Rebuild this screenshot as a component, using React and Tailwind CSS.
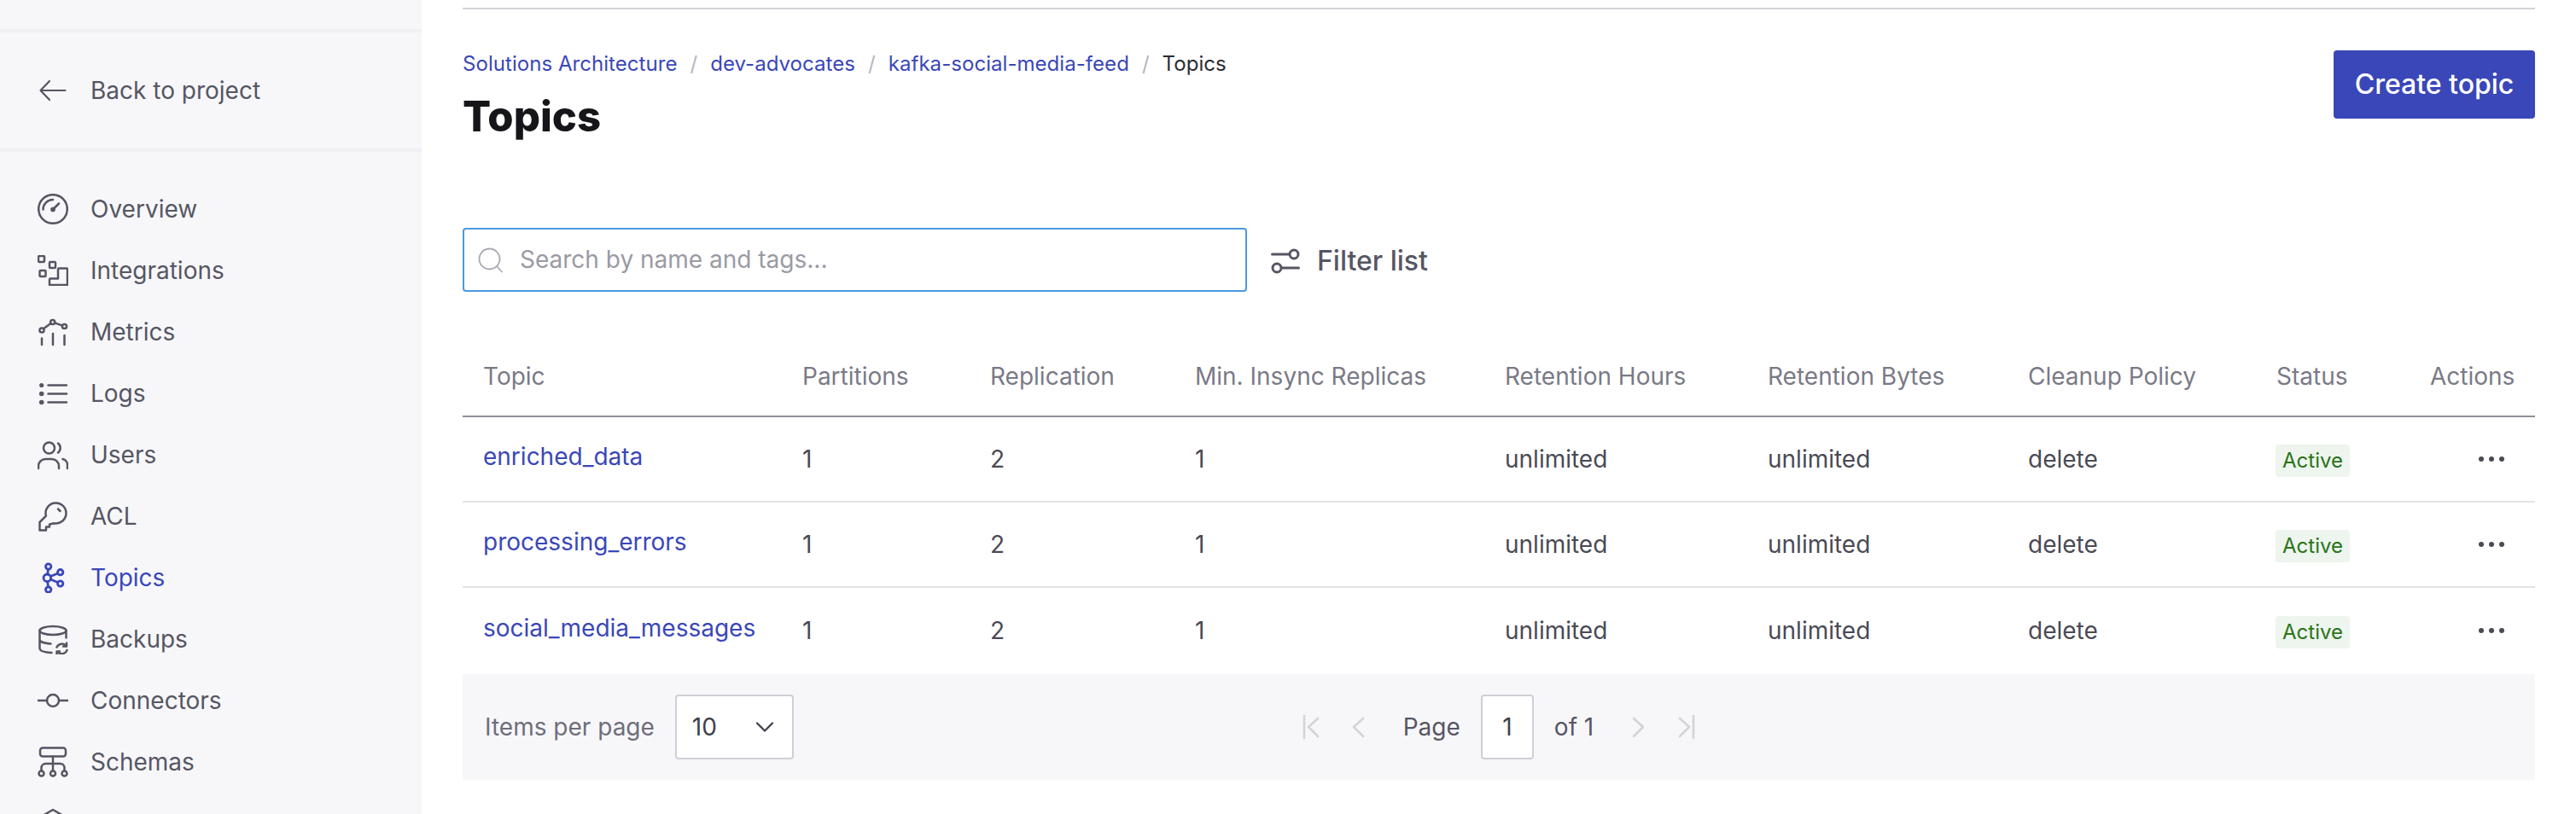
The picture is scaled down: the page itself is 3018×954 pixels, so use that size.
import { ChevronDown } from "lucide-react";

const BLUE = "#3a47b8";

// Sidebar icons are drawn on a 36px box, same as the reference.
function NavIcon({ children, color = "#565663", width = "2.5" }) {
  return (
    <svg width="36" height="36" viewBox="0 0 36 36" fill="none" stroke={color} strokeWidth={width} strokeLinecap="round" strokeLinejoin="round" className="shrink-0">
      {children}
    </svg>
  );
}

const navItems = [
  {
    label: "Overview",
    icon: (
      <>
        <circle cx="18" cy="18" r="16.8" />
        <path d="M6.5 18.5A11.5 11.5 0 0 1 18 7" />
        <path d="M18 18.5L25 11.5" />
        <circle cx="18" cy="18.5" r="1.6" fill="#565663" />
      </>
    ),
  },
  {
    label: "Integrations",
    icon: (
      <>
        <rect x="1" y="1" width="7" height="7" rx="1" />
        <rect x="14" y="8" width="7" height="7" rx="1" />
        <rect x="2.5" y="18" width="7" height="7" rx="1" />
        <path d="M14 35V28.5a1 1 0 0 1 1-1h9V16.5a1 1 0 0 1 1-1h9a1 1 0 0 1 1 1V34a1 1 0 0 1-1 1z" />
      </>
    ),
  },
  {
    label: "Metrics",
    icon: (
      <>
        <circle cx="5" cy="16" r="2.6" />
        <circle cx="17.7" cy="6.5" r="2.6" />
        <circle cx="31.5" cy="11.5" r="2.6" />
        <path d="M7 14.2L15.5 8M20.2 7.4L29 10.6" />
        <path d="M5 25.5V33M18 20V33M31.5 22V33" />
      </>
    ),
  },
  {
    label: "Logs",
    icon: (
      <>
        <circle cx="4.7" cy="8.5" r="2.6" fill="#565663" stroke="none" />
        <circle cx="4.7" cy="18.5" r="2.8" fill="#565663" stroke="none" />
        <circle cx="4.7" cy="28.5" r="2.8" fill="#565663" stroke="none" />
        <path d="M12.5 8.5H34M12.5 18.5H34M12.5 28.5H34" />
      </>
    ),
  },
  {
    label: "Users",
    icon: (
      <>
        <circle cx="13.5" cy="10" r="6.5" />
        <path d="M24 4.5a7 7 0 0 1 0 11" />
        <path d="M1 34v-2.5a8.5 8.5 0 0 1 8.5-8.5h7a8.5 8.5 0 0 1 8.5 8.5V34" />
        <path d="M29.5 23a7 7 0 0 1 5.5 7v4" />
      </>
    ),
  },
  {
    label: "ACL",
    icon: (
      <>
        <path d="M19.4 26.3A12 12 0 1 0 9.9 17.6L2.5 25V34.5H10V30.5H14V27.5z" />
        <path d="M24 9.5l2.5 2.5" />
      </>
    ),
  },
  {
    label: "Topics",
    active: true,
    icon: (
      <>
        <circle cx="12.7" cy="5" r="3.2" />
        <circle cx="11.3" cy="18.3" r="4.3" />
        <circle cx="12.7" cy="32" r="3.2" />
        <circle cx="26.7" cy="11.7" r="3.2" />
        <circle cx="26.7" cy="25" r="3.2" />
        <path d="M12.5 8.2L11.7 14M12.5 28.8L11.7 22.6M15.2 16.5L23.7 13M15.2 20L23.7 23.5" />
      </>
    ),
  },
  {
    label: "Backups",
    icon: (
      <>
        <ellipse cx="18" cy="8" rx="15.5" ry="5" />
        <path d="M33.5 8v8.5M2.5 8v21c0 3 5 4.5 14 5M2.5 18.5c0 2.5 5 4.5 13 5" />
        <path d="M22.5 27.5a6.5 6.5 0 0 1 11-1.5M34.5 31a6.5 6.5 0 0 1-11 2" />
        <path d="M34 22.5V26.5H30M22.5 36V32.5H26" />
      </>
    ),
  },
  {
    label: "Connectors",
    icon: (
      <>
        <circle cx="18" cy="18" r="7" />
        <path d="M0.5 18H11M25 18H35.5" />
      </>
    ),
  },
  {
    label: "Schemas",
    icon: (
      <>
        <rect x="3" y="1.5" width="30" height="10" rx="3" />
        <path d="M18 11.5V28M4.5 28V25a5 5 0 0 1 5-5h17a5 5 0 0 1 5 5v3" />
        <circle cx="4.5" cy="31.5" r="3" />
        <circle cx="18" cy="31.5" r="3" />
        <circle cx="31.5" cy="31.5" r="3" />
      </>
    ),
  },
];

const topics = ["enriched_data", "processing_errors", "social_media_messages"];

function Sidebar() {
  return (
    <aside className="w-[494px] shrink-0 bg-[#f7f7fa] pt-[34px] text-[28px] text-[#565663]">
      <div className="flex h-[144px] items-center gap-[26px] border-y-[4px] border-[#f0f0f4] pl-[44px]">
        <svg width="36" height="36" viewBox="0 0 36 36" fill="none" stroke="#565663" strokeWidth="2.2" strokeLinecap="round" strokeLinejoin="round">
          <path d="M3.5 18H32.5M14 7L3.5 18L14 29" />
        </svg>
        <span>Back to project</span>
      </div>
      <nav className="pt-[31px]">
        {navItems.map((item) => (
          <div key={item.label} className={`flex h-[72px] items-center gap-[26px] pl-[44px] ${item.active ? "text-[#3a47b8]" : ""}`}>
            <NavIcon color={item.active ? BLUE : "#565663"} width={item.active ? "2.8" : "2.5"}>{item.icon}</NavIcon>
            <span>{item.label}</span>
          </div>
        ))}
        {/* next item is cut off by the window, only its icon's tip shows */}
        <div className="flex h-[72px] items-center pl-[44px]">
          <NavIcon>
            <path d="M6 9L18 2L30 9" />
          </NavIcon>
        </div>
      </nav>
    </aside>
  );
}

function Breadcrumbs() {
  const links = ["Solutions Architecture", "dev-advocates", "kafka-social-media-feed"];
  return (
    <div className="flex items-center text-[24px] leading-[32px] tracking-[0.05px] text-[#3a47b8]">
      {links.map((link) => (
        <span key={link} className="flex items-center">
          <span>{link}</span>
          <span className="px-[15px] text-[#b5b5bd]">/</span>
        </span>
      ))}
      <span className="text-[#2b2b33]">Topics</span>
    </div>
  );
}

function PagerIcon({ d }) {
  return (
    <svg width="20" height="30" viewBox="0 0 20 30" fill="none" stroke="#d3d3d8" strokeWidth="2.6" strokeLinecap="round" strokeLinejoin="round">
      <path d={d} />
    </svg>
  );
}

function Pagination() {
  return (
    <div className="grid h-[124px] grid-cols-[1fr_auto_1fr] items-center bg-[#f7f7fa] px-[26px] text-[28px] text-[#565663]">
      <div className="flex items-center gap-[24px]">
        <span className="text-[#6e6e7a]">Items per page</span>
        <div className="flex h-[76px] w-[139px] items-center justify-between rounded-[4px] border-2 border-[#cfcfd6] bg-white pl-[18px] pr-[14px] text-[#3f3f4a]">
          <span>10</span>
          <ChevronDown size={36} strokeWidth={1.5} />
        </div>
      </div>
      <div className="flex items-center">
        <PagerIcon d="M2 2V28M18 5L7 15L18 26" />
        <span className="ml-[36px]"><PagerIcon d="M15 5L4 15L15 26" /></span>
        <span className="ml-[42px]">Page</span>
        <div className="ml-[24px] flex h-[76px] w-[62px] items-center justify-center rounded-[4px] border-2 border-[#cfcfd6] bg-white text-[#3f3f4a]">1</div>
        <span className="ml-[24px]">of 1</span>
        <span className="ml-[42px]"><PagerIcon d="M5 5L16 15L5 26" /></span>
        <span className="ml-[37px]"><PagerIcon d="M2 5L13 15L2 26M18 2V28" /></span>
      </div>
      <div />
    </div>
  );
}

function TopicsTable() {
  const cols = "grid grid-cols-[374px_220px_240px_363px_308px_305px_292px_181px_145px] items-center";
  const headers = ["Topic", "Partitions", "Replication", "Min. Insync Replicas", "Retention Hours", "Retention Bytes", "Cleanup Policy", "Status", "Actions"];
  return (
    <div className="mt-[53px] text-[28px]">
      <div className={`${cols} h-[94px] border-b-2 border-[#8e8e99] text-[#7a7a87]`}>
        {headers.map((h, i) => (
          <div key={h} className={i === 7 ? "pl-[23px]" : i === 8 ? "pl-[22px]" : "pl-[24px]"}>{h}</div>
        ))}
      </div>
      {topics.map((name, i) => (
        <div key={name} className={`${cols} text-[#4a4a55] ${i < 2 ? "h-[100px] border-b-2 border-[#e3e3e6]" : "h-[101px] pb-[2px]"}`}>
          <div className="-mt-[6px] pl-[24px] text-[#3a47b8]">{name}</div>
          <div className="pl-[24px]">1</div>
          <div className="pl-[24px]">2</div>
          <div className="pl-[24px]">1</div>
          <div className="pl-[24px]">unlimited</div>
          <div className="pl-[24px]">unlimited</div>
          <div className="pl-[24px]">delete</div>
          <div className="pl-[22px]">
            <span className="inline-flex h-[38px] w-[87px] items-center justify-center rounded-[4px] bg-[#edf5ee] text-[24px] text-[#2a7318]">Active</span>
          </div>
          <div className="flex gap-[6px] pl-[79px]">
            <span className="size-[6px] rounded-full bg-[#4a4a55]" />
            <span className="size-[6px] rounded-full bg-[#4a4a55]" />
            <span className="size-[6px] rounded-full bg-[#4a4a55]" />
          </div>
        </div>
      ))}
      <Pagination />
    </div>
  );
}

export default function App() {
  return (
    <div className="flex h-[954px] overflow-hidden bg-white font-['Inter',sans-serif]">
      <Sidebar />
      <main className="flex-1 px-[48px] pt-[9px]">
        <div className="h-[2px] bg-[#d2d2d8]" />
        {/* Header Section */}
        <div className="mt-[48px] flex h-[208px] items-start justify-between">
          <div>
            <Breadcrumbs />
            <h1 className="mt-[16px] text-[49px] font-extrabold leading-[60px] text-[#15151a]">Topics</h1>
          </div>
          <button className="flex h-[80px] w-[236px] items-center justify-center rounded-[4px] bg-[#3a47b8] text-[32px] font-medium text-white">
            Create topic
          </button>
        </div>

        {/* Search and filter */}
        <div className="flex items-center gap-[28px]">
          <div className="flex h-[75px] w-[919px] items-center gap-[19px] rounded-[4px] border-2 border-[#4a98e0] pl-[16px] text-[28px] text-[#9a9aa5]">
            <svg width="30" height="30" viewBox="0 0 30 30" fill="none" stroke="#a9a9b3" strokeWidth="1.8" strokeLinecap="round">
              <circle cx="13.5" cy="13.5" r="12" />
              <path d="M22.5 22.5L28 28.5" />
            </svg>
            <span className="-mt-[1px]">Search by name and tags...</span>
          </div>
          <div className="mt-[2px] flex items-center gap-[20px] text-[32px] font-medium text-[#565663]">
            <svg width="34" height="30" viewBox="0 0 34 30" fill="none" stroke="#565663" strokeWidth="3" strokeLinecap="round">
              <circle cx="27" cy="7" r="5" />
              <circle cx="7" cy="23" r="5" />
              <path d="M1.5 7H21.5M12.5 23H32.5" />
            </svg>
            <span>Filter list</span>
          </div>
        </div>

        <TopicsTable />
      </main>
    </div>
  );
}
